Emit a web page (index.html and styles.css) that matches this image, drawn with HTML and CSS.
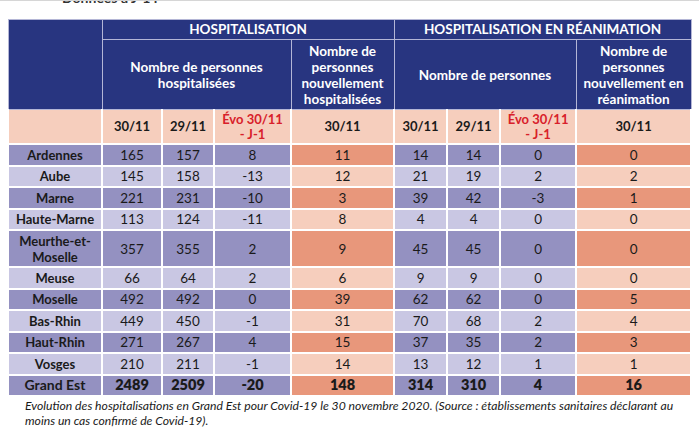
FILE: index.html
```html
<!DOCTYPE html>
<html lang="fr">
<head>
<meta charset="utf-8">
<link rel="stylesheet" href="styles.css">
</head>
<body>
<div class="topline"><div class="title">Données à J-1 :</div></div>
<table class="data">
  <colgroup>
    <col style="width:94px"><col style="width:60px"><col style="width:52px"><col style="width:77px"><col style="width:103px"><col style="width:53px"><col style="width:53px"><col style="width:76px"><col style="width:115px">
  </colgroup>
  <thead>
    <tr class="h1">
      <th rowspan="2"></th>
      <th colspan="4">HOSPITALISATION</th>
      <th colspan="4">HOSPITALISATION EN RÉANIMATION</th>
    </tr>
    <tr class="h2">
      <th colspan="3">Nombre de personnes<br>hospitalisées</th>
      <th>Nombre de<br>personnes<br>nouvellement<br>hospitalisées</th>
      <th colspan="3">Nombre de personnes</th>
      <th>Nombre de<br>personnes<br>nouvellement en<br>réanimation</th>
    </tr>
    <tr class="h3">
      <td></td>
      <td>30/11</td><td>29/11</td><td class="evo">Évo 30/11<br>- J-1</td><td>30/11</td>
      <td>30/11</td><td>29/11</td><td class="evo">Évo 30/11<br>- J-1</td><td>30/11</td>
    </tr>
  </thead>
  <tbody>
    <tr class="dk"><td>Ardennes</td><td>165</td><td>157</td><td>8</td><td class="s">11</td><td>14</td><td>14</td><td>0</td><td class="s">0</td></tr>
    <tr class="lt"><td>Aube</td><td>145</td><td>158</td><td>-13</td><td class="s">12</td><td>21</td><td>19</td><td>2</td><td class="s">2</td></tr>
    <tr class="dk"><td>Marne</td><td>221</td><td>231</td><td>-10</td><td class="s">3</td><td>39</td><td>42</td><td>-3</td><td class="s">1</td></tr>
    <tr class="lt"><td>Haute-Marne</td><td>113</td><td>124</td><td>-11</td><td class="s">8</td><td>4</td><td>4</td><td>0</td><td class="s">0</td></tr>
    <tr class="dk tall"><td>Meurthe-et-<br>Moselle</td><td>357</td><td>355</td><td>2</td><td class="s">9</td><td>45</td><td>45</td><td>0</td><td class="s">0</td></tr>
    <tr class="lt"><td>Meuse</td><td>66</td><td>64</td><td>2</td><td class="s">6</td><td>9</td><td>9</td><td>0</td><td class="s">0</td></tr>
    <tr class="dk"><td>Moselle</td><td>492</td><td>492</td><td>0</td><td class="s">39</td><td>62</td><td>62</td><td>0</td><td class="s">5</td></tr>
    <tr class="lt"><td>Bas-Rhin</td><td>449</td><td>450</td><td>-1</td><td class="s">31</td><td>70</td><td>68</td><td>2</td><td class="s">4</td></tr>
    <tr class="dk"><td>Haut-Rhin</td><td>271</td><td>267</td><td>4</td><td class="s">15</td><td>37</td><td>35</td><td>2</td><td class="s">3</td></tr>
    <tr class="lt"><td>Vosges</td><td>210</td><td>211</td><td>-1</td><td class="s">14</td><td>13</td><td>12</td><td>1</td><td class="s">1</td></tr>
    <tr class="dk total"><td>Grand Est</td><td>2489</td><td>2509</td><td>-20</td><td class="s">148</td><td>314</td><td>310</td><td>4</td><td class="s">16</td></tr>
  </tbody>
</table>
<p class="caption">Evolution des hospitalisations en Grand Est pour Covid-19 le 30 novembre 2020. (Source : établissements sanitaires déclarant au moins un cas confirmé de Covid-19).</p>
</body>
</html>
```
FILE: styles.css
```css
html, body {
  margin: 0;
  padding: 0;
  background: #ffffff;
}
body {
  font-family: Lato, "Open Sans", sans-serif;
  color: #1a1a1a;
}
.topline {
  height: 4px;
  overflow: hidden;
  border-top: 1px solid #d6d6d6;
  padding-left: 62px;
}
.title {
  font-weight: 700;
  font-size: 14px;
  line-height: 14px;
  margin-top: -10px;
  color: #333;
}
.data {
  margin: 14px 0 0 7px;
  border-collapse: collapse;
  table-layout: fixed;
  width: 683px;
}
.data th, .data td {
  padding: 0;
  text-align: center;
  vertical-align: middle;
}
.data thead th {
  background: #283580;
  color: #ffffff;
  font-weight: 700;
  font-size: 13.5px;
  border: 1px solid #b4b6d6;
}
.h1 th { height: 19px; line-height: 19px; }
.h2 th { height: 69px; line-height: 16px; }
.h3 td {
  background: #f6cebd;
  font-weight: 700;
  font-size: 13px;
  height: 33px;
  line-height: 15px;
  border: 2px solid #ffffff;
  border-top: 1px solid #b4b6d6;
}
.h3 td.evo { color: #d8202a; }
tbody td {
  font-size: 13.5px;
  height: 19.5px;
  line-height: 16px;
  border: 2px solid #ffffff;
}
tbody tr.tall td { height: 35px; }
tbody tr td:first-child { font-weight: 700; font-size: 13px; }
tr.dk td { background: #9491c1; }
tr.lt td { background: #c9c7e3; }
tr.dk td.s { background: #e8977b; }
tr.lt td.s { background: #f6cebd; }
tr.total td { font-weight: 800; font-size: 14.5px; }
tr.total td:first-child { font-size: 14px; }
.caption {
  margin: 1px 0 0 25px;
  width: 666px;
  font-style: italic;
  font-size: 12.2px;
  line-height: 15px;
  color: #1a1a1a;
}
```
